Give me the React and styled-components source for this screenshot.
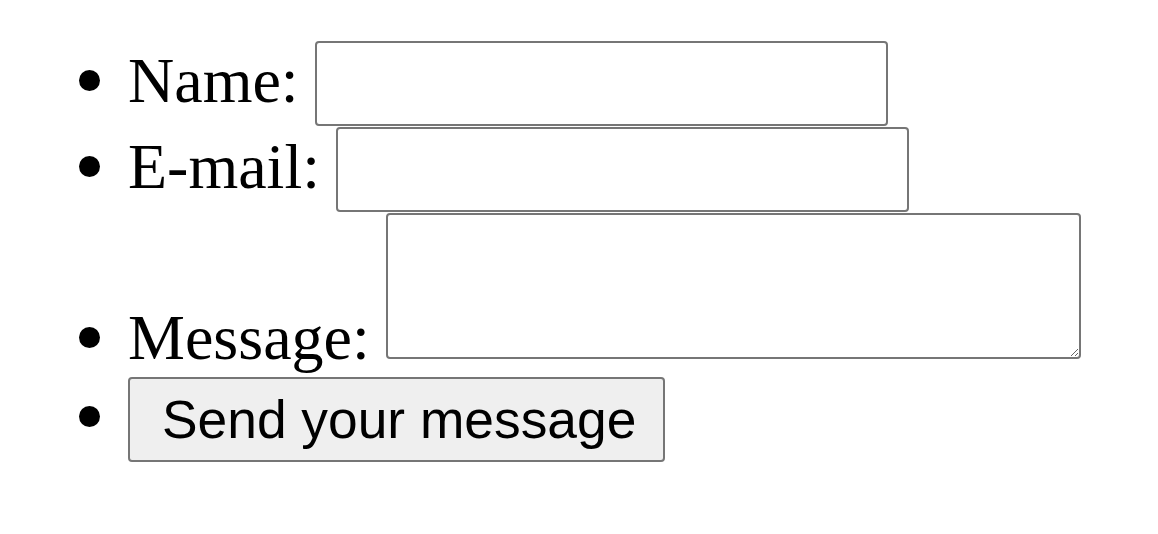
import styled, { createGlobalStyle } from "styled-components";

const GlobalStyle = createGlobalStyle`
  html, body {
    margin: 0;
    padding: 0;
    background: #ffffff;
  }
`;

const FormList = styled.ul`
  margin: 0;
  padding: 41px 0 0 128px;
  list-style: disc;
  font-family: "Liberation Serif", "Times New Roman", serif;
  font-size: 64px;
  color: #000000;
`;

const Item = styled.li`
  &::marker {
    font: 71px/0 "Liberation Serif", serif;
  }
`;

const TextField = styled.input`
  box-sizing: border-box;
  width: 573px;
  height: 85px;
  padding: 10px 14px;
  margin: 0 0 1px;
  border: 2px solid #767676;
  border-radius: 4px;
  background: #ffffff;
  font-family: "Liberation Sans", Arial, sans-serif;
  font-size: 53.33px;
  vertical-align: baseline;
  outline: none;
`;

const MessageBox = styled.textarea`
  box-sizing: border-box;
  width: 695px;
  height: 146px;
  padding: 6px;
  margin: 0;
  border: 2px solid #767676;
  border-radius: 4px;
  background: #ffffff;
  font-family: "Liberation Mono", monospace;
  font-size: 53.33px;
  vertical-align: baseline;
  resize: both;
  outline: none;
`;

const SendButton = styled.button`
  box-sizing: border-box;
  width: 537px;
  height: 85px;
  padding: 0 28px 0 32px;
  margin: 2px 0 0;
  border: 2px solid #767676;
  border-radius: 4px;
  background: #efefef;
  color: #000000;
  font-family: "Liberation Sans", Arial, sans-serif;
  font-size: 53.33px;
  line-height: 1.15;
  text-align: left;
  white-space: nowrap;
  overflow: hidden;
  vertical-align: baseline;
  cursor: pointer;
`;

const App = () => {
  return (
    <>
      <GlobalStyle />
      <form onSubmit={(e) => e.preventDefault()}>
        <FormList>
          <Item>
            Name: <TextField type="text" name="name" />
          </Item>
          <Item>
            E-mail: <TextField type="email" name="email" />
          </Item>
          <Item>
            Message: <MessageBox name="message" />
          </Item>
          <Item>
            <SendButton type="submit">Send your message</SendButton>
          </Item>
        </FormList>
      </form>
    </>
  );
};

export default App;
